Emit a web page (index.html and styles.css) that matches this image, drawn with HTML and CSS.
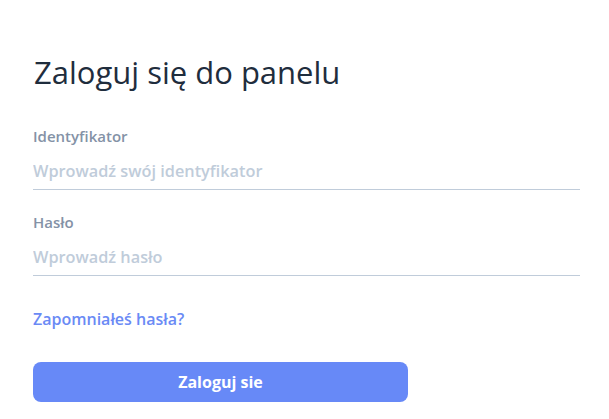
FILE: index.html
```html
<!DOCTYPE html>
<html lang="pl">
<head>
    <meta charset="UTF-8">
    <meta name="viewport" content="width=device-width, initial-scale=1.0">
    <title>Logowanie</title>
    <link rel="stylesheet" href="styles.css">
</head>
<body>

<div class="login">
    <h1>Zaloguj się do panelu</h1>

    <form class="login-form" onsubmit="return false">
        <label class="field">
            <span class="label">Identyfikator</span>
            <input type="text" class="input" placeholder="Wprowadź swój identyfikator">
        </label>

        <label class="field">
            <span class="label">Hasło</span>
            <input type="password" class="input" placeholder="Wprowadź hasło">
        </label>

        <a href="#" class="forgot">Zapomniałeś hasła?</a>

        <button type="submit" class="button">Zaloguj sie</button>
    </form>
</div>

</body>
</html>
```

FILE: styles.css
```css
body {
    margin: 0;
    font-family: "Open Sans", Arial, sans-serif;
    background-color: #ffffff;
    color: #1f2d3d;
}

.login {
    width: 547px;
    padding: 53px 0 0 33px;
}

h1 {
    margin: 0 0 35px 1px;
    font-size: 31px;
    line-height: 38px;
    font-weight: 500;
    color: #1f2d3d;
}

.login-form {
    display: flex;
    flex-direction: column;
    align-items: flex-start;
}

.field {
    display: flex;
    flex-direction: column;
    width: 100%;
    margin-bottom: 22px;
}

.label {
    font-size: 15px;
    line-height: 20px;
    font-weight: 600;
    color: #8492a6;
}

.input {
    margin-top: 6px;
    height: 38px;
    padding: 0;
    border: none;
    border-bottom: 1px solid #c0ccda;
    font-family: inherit;
    font-size: 16.3px;
    font-weight: 600;
    color: #1f2d3d;
    outline: none;
    box-sizing: border-box;
}

.input::placeholder {
    color: #c0ccda;
}

.forgot {
    margin-top: 10px;
    font-size: 16px;
    line-height: 22px;
    font-weight: 600;
    color: #6a8af5;
    text-decoration: none;
}

.button {
    margin-top: 32px;
    width: 375px;
    height: 40px;
    border: none;
    border-radius: 8px;
    background-color: #6789f7;
    color: #ffffff;
    font-family: inherit;
    font-size: 16px;
    font-weight: 700;
    cursor: pointer;
}
```
